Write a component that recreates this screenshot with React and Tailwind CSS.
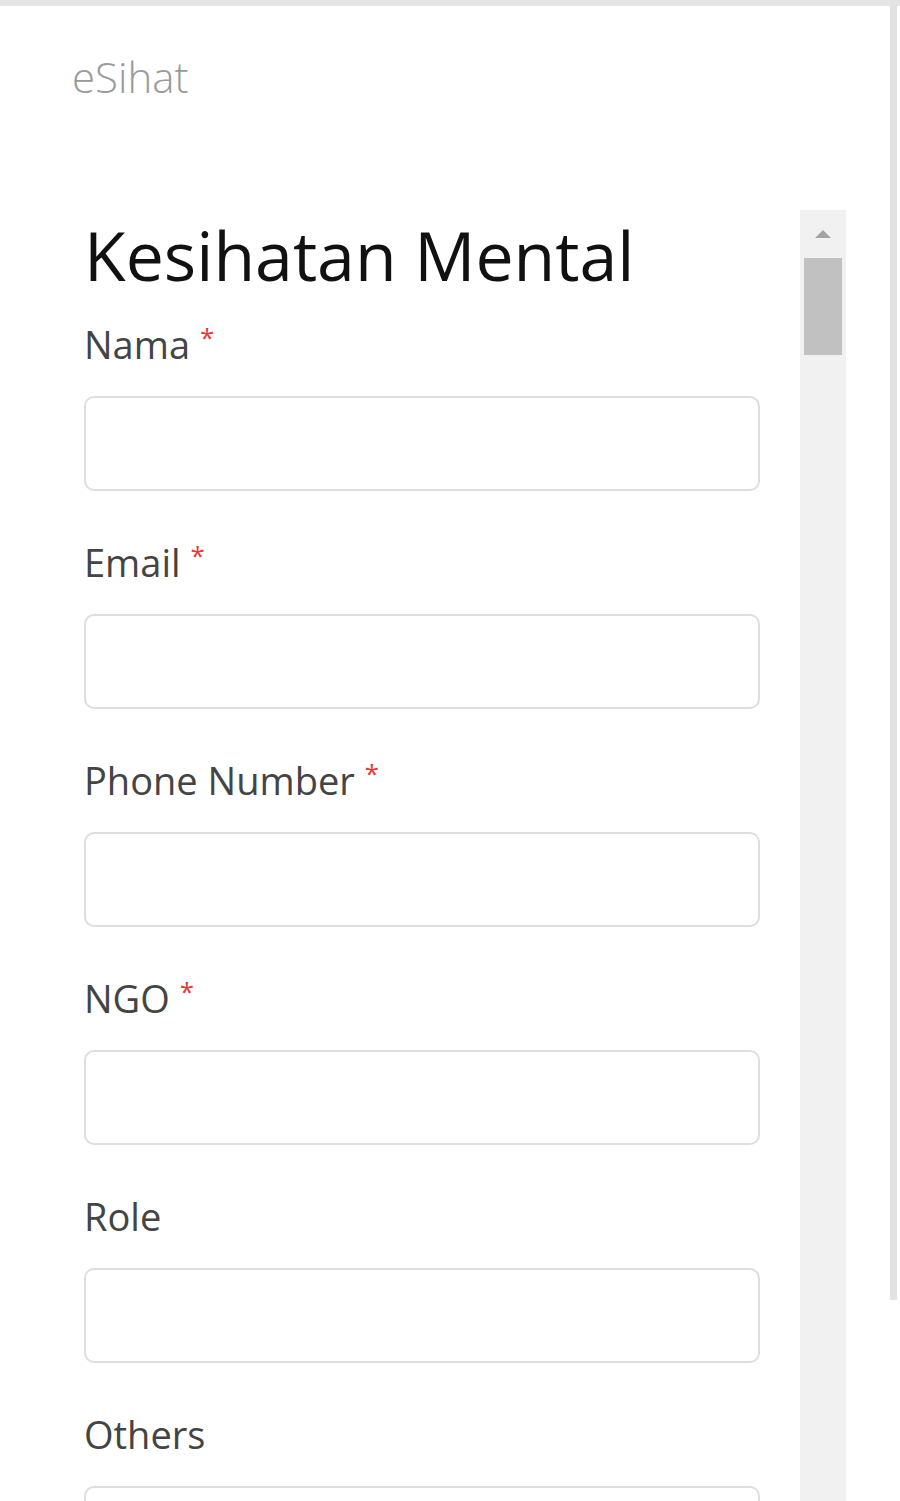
import React from 'react';

const fields = [
  { label: 'Nama', required: true },
  { label: 'Email', required: true },
  { label: 'Phone Number', required: true },
  { label: 'NGO', required: true },
  { label: 'Role', required: false },
  { label: 'Others', required: false }
];

const Field = ({ label, required }) => (
  <div className="flex flex-col">
    <label className="h-[52px] flex items-center text-[38px] leading-none text-[#444]">
      <span>{label}</span>
      {required && <span className="ml-[10px] -mt-[14px] text-[26px] text-[#e53935]">*</span>}
    </label>
    <input
      type="text"
      className="mt-[26px] h-[95px] w-[676px] rounded-[10px] border-2 border-[#dcdee1] bg-white px-4 outline-none"
    />
    <div className="h-[45px]" />
  </div>
);

const Scrollbar = () => (
  <div className="w-[46px] h-full bg-[#f1f1f1] flex flex-col items-center">
    <div className="h-[48px] w-full flex items-center justify-center">
      <svg width="18" height="10" viewBox="0 0 18 10">
        <polygon points="9,1 17,9 1,9" fill="#a3a3a3" />
      </svg>
    </div>
    <div className="w-[38px] h-[97px] bg-[#c1c1c1]" />
  </div>
);

const App = () => {
  return (
    <div
      className="w-[900px] h-[1501px] overflow-hidden bg-white border-t-[6px] border-[#e4e4e4] flex"
      style={{ fontFamily: '"Open Sans", "Noto Sans", sans-serif' }}
    >
      <div className="w-[890px] h-full flex flex-col">
        <div className="pl-[72px] pt-[50px] h-[204px]">
          <span className="text-[42px] leading-none font-light text-[#9a9a9a]">eSihat</span>
        </div>
        <div className="flex flex-1 min-h-0">
          <div className="w-[800px] pl-[84px] flex flex-col">
            <h1 className="text-[68px] leading-none font-normal text-[#111] mt-[11px] mb-[29px]">
              Kesihatan Mental
            </h1>
            {fields.map((f) => (
              <Field key={f.label} label={f.label} required={f.required} />
            ))}
          </div>
          <Scrollbar />
        </div>
      </div>
      <div className="w-[7px] h-[1294px] bg-[#e2e2e2]" />
    </div>
  );
};

export default App;
